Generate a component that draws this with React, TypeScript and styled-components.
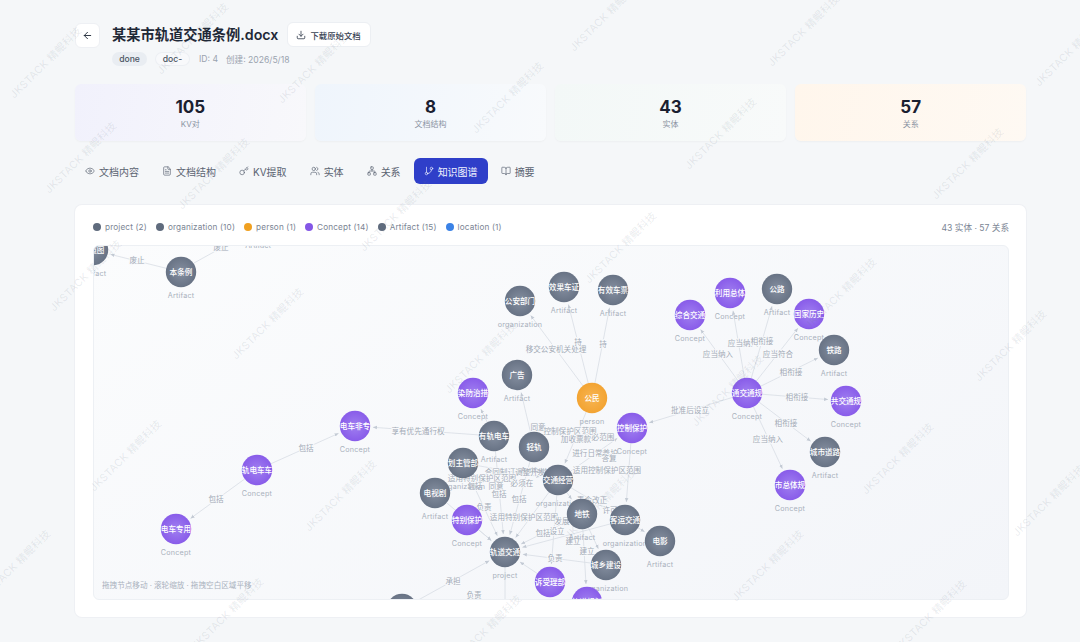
import React from "react";
import styled, { createGlobalStyle } from "styled-components";
import { ArrowLeft, Download, Eye, FileText, Key, Users, Network, GitBranch, BookOpen } from "lucide-react";

const GlobalStyle = createGlobalStyle`
  html, body { margin: 0; padding: 0; background: #f5f7f9; }
  body { font-family: Inter, "Noto Sans CJK SC", sans-serif; color: #1f2937; overflow: hidden; }
`;

const Page = styled.div`
  position: relative;
  width: 1080px;
  height: 642px;
  box-sizing: border-box;
  padding: 22px 54px 0 75px;
  overflow: hidden;
`;

const Header = styled.header`
  display: flex;
  gap: 12px;
`;

const BackButton = styled.button`
  width: 25px;
  height: 25px;
  margin-top: 1px;
  padding: 0;
  border: 1px solid #eef0f4;
  border-radius: 6px;
  background: #fff;
  color: #1f2937;
  display: flex;
  align-items: center;
  justify-content: center;
`;

const HeadText = styled.div`
  display: flex;
  flex-direction: column;
  gap: 5px;
`;

const TitleRow = styled.div`
  display: flex;
  align-items: center;
  gap: 9px;
`;

const Title = styled.h1`
  margin: 0;
  font-size: 14.25px;
  line-height: 25px;
  font-weight: 600;
  color: #1f2937;
`;

const DownloadButton = styled.button`
  display: flex;
  align-items: center;
  gap: 4px;
  height: 25px;
  width: 84px;
  padding: 0 0 0 8px;
  box-sizing: border-box;
  background: #fff;
  border: 1px solid #eceff3;
  border-radius: 6px;
  font: 500 8.4px Inter, "Noto Sans CJK SC", sans-serif;
  color: #374151;
`;

const MetaRow = styled.div`
  display: flex;
  align-items: center;
  height: 14px;
  font-size: 8.6px;
  color: #9aa3af;
`;

const Badge = styled.span<{ $outline?: boolean }>`
  width: 35px;
  height: 14px;
  line-height: 14px;
  text-align: center;
  border-radius: 7px;
  margin-right: 8px;
  font-weight: 500;
  color: #4b5563;
  background: ${(p) => (p.$outline ? "#f8f9fb" : "#e9edf2")};
  box-shadow: ${(p) => (p.$outline ? "inset 0 0 0 1px #eceff3" : "none")};
`;

const MetaItem = styled.span`
  margin-left: 1px;
  margin-right: 7px;
`;

const StatRow = styled.section`
  display: grid;
  grid-template-columns: repeat(4, 1fr);
  gap: 9.5px;
  margin-top: 18px;
`;

const StatCard = styled.div<{ $from: string; $to: string }>`
  height: 57px;
  padding-top: 2px;
  box-sizing: border-box;
  border-radius: 6px;
  background: linear-gradient(100deg, ${(p) => p.$from}, ${(p) => p.$to});
  box-shadow: 0 1px 2px rgba(15, 23, 42, 0.035);
  display: flex;
  flex-direction: column;
  align-items: center;
  justify-content: center;
`;

const StatValue = styled.div`
  font-size: 17px;
  line-height: 20px;
  font-weight: 700;
  color: #1a2030;
`;

const StatLabel = styled.div`
  margin-top: 2px;
  font-size: 8px;
  line-height: 11px;
  color: #8b94a3;
`;

const Tabs = styled.nav`
  display: flex;
  gap: 3px;
  margin-top: 17px;
`;

const Tab = styled.div<{ $active?: boolean }>`
  display: flex;
  align-items: center;
  gap: 4px;
  height: 26px;
  padding: 0 10px;
  border-radius: 6px;
  font-size: 10px;
  color: ${(p) => (p.$active ? "#f2f4ff" : "#5b6472")};
  background: ${(p) => (p.$active ? "#2f3fc9" : "transparent")};
`;

const Card = styled.section`
  margin-top: 21px;
  height: 412px;
  box-sizing: border-box;
  padding: 16px 17px 17px 18px;
  background: #fff;
  border-radius: 7px;
  box-shadow: 0 0 0 1px #eef0f4;
  display: flex;
  flex-direction: column;
`;

const CardHead = styled.div`
  display: flex;
  align-items: center;
  justify-content: space-between;
  height: 12px;
  margin-bottom: 12px;
`;

const Legend = styled.div`
  display: flex;
  gap: 9px;
`;

const LegendItem = styled.span`
  display: flex;
  align-items: center;
  gap: 4px;
  font-size: 8.2px;
  letter-spacing: 0.15px;
  color: #7b8594;
`;

const Dot = styled.i<{ $color: string }>`
  width: 8px;
  height: 8px;
  border-radius: 50%;
  background: ${(p) => p.$color};
`;

const Counts = styled.span`
  font-size: 8.6px;
  color: #7b8594;
`;

const Canvas = styled.div`
  position: relative;
  flex: 1;
  border: 1px solid #edf0f4;
  border-radius: 6px;
  background: linear-gradient(150deg, #fbfcfd, #f3f5f9);
  overflow: hidden;
`;

const GraphSvg = styled.svg`
  display: block;
  width: 100%;
  height: 100%;
  font-family: Inter, "Noto Sans CJK SC", sans-serif;
`;

const Hint = styled.div`
  position: absolute;
  left: 8px;
  bottom: 9px;
  font-size: 7.6px;
  color: #aab2be;
`;

const WatermarkText = styled.span`
  position: absolute;
  transform: translate(-50%, -50%) rotate(-45deg);
  white-space: nowrap;
  font-size: 10.5px;
  letter-spacing: 0.3px;
  color: rgba(110, 122, 140, 0.15);
  pointer-events: none;
`;

const tabs = [
  { icon: Eye, label: "文档内容" },
  { icon: FileText, label: "文档结构" },
  { icon: Key, label: "KV提取" },
  { icon: Users, label: "实体" },
  { icon: Network, label: "关系" },
  { icon: GitBranch, label: "知识图谱", active: true },
  { icon: BookOpen, label: "摘要" },
];

const stats = [
  { value: "105", label: "KV对", from: "#f1f1fc", to: "#f8f8fb" },
  { value: "8", label: "文档结构", from: "#eff5fc", to: "#f8fafc" },
  { value: "43", label: "实体", from: "#f3f8f7", to: "#f8fafa" },
  { value: "57", label: "关系", from: "#fff6ec", to: "#fef9f3" },
];

const legend = [
  { color: "#5f6b7d", label: "project (2)" },
  { color: "#5f6b7d", label: "organization (10)" },
  { color: "#f0a020", label: "person (1)" },
  { color: "#8457e6", label: "Concept (14)" },
  { color: "#5f6b7d", label: "Artifact (15)" },
  { color: "#3b82e6", label: "location (1)" },
];

type Kind = "artifact" | "org" | "project" | "concept" | "person";
const kinds: Record<Kind, { fill: string; sub: string }> = {
  artifact: { fill: "url(#grey)", sub: "Artifact" },
  org: { fill: "url(#grey)", sub: "organization" },
  project: { fill: "url(#grey)", sub: "project" },
  concept: { fill: "url(#violet)", sub: "Concept" },
  person: { fill: "url(#amber)", sub: "person" },
};

const nodes: Record<string, { x: number; y: number; kind: Kind; text: string }> = {
  corner: { x: 93, y: 250, kind: "artifact", text: "轨道图" },
  law: { x: 181, y: 272, kind: "artifact", text: "本条例" },
  police: { x: 520, y: 301, kind: "org", text: "公安部门" },
  cert: { x: 564, y: 287, kind: "artifact", text: "效果车证" },
  ticket: { x: 613, y: 290, kind: "artifact", text: "有效车票" },
  ad: { x: 517, y: 375, kind: "artifact", text: "广告" },
  pollution: { x: 473, y: 393, kind: "concept", text: "染防治措" },
  citizen: { x: 592, y: 398, kind: "person", text: "公民" },
  control: { x: 632, y: 428, kind: "concept", text: "控制保护" },
  tram: { x: 494, y: 436, kind: "artifact", text: "有轨电车" },
  light: { x: 534, y: 447, kind: "artifact", text: "轻轨" },
  planning: { x: 463, y: 463, kind: "org", text: "划主管部" },
  operator: { x: 558, y: 480, kind: "org", text: "交通经营" },
  tv: { x: 435, y: 493, kind: "artifact", text: "电视剧" },
  special: { x: 467, y: 520, kind: "concept", text: "特别保护" },
  metro: { x: 582, y: 514, kind: "artifact", text: "地铁" },
  passenger: { x: 625, y: 520, kind: "org", text: "客运交通" },
  film: { x: 660, y: 541, kind: "artifact", text: "电影" },
  rail: { x: 505, y: 552, kind: "project", text: "轨道交通" },
  urban: { x: 606, y: 565, kind: "org", text: "城乡建设" },
  appeal: { x: 550, y: 582, kind: "concept", text: "诉受理部" },
  lower: { x: 587, y: 602, kind: "concept", text: "轨道规划" },
  bottom: { x: 402, y: 609, kind: "artifact", text: "政府" },
  lane: { x: 355, y: 426, kind: "concept", text: "电车非专" },
  vehicle: { x: 257, y: 470, kind: "concept", text: "轨电车车" },
  only: { x: 176, y: 529, kind: "concept", text: "电车专用" },
  plan: { x: 747, y: 393, kind: "concept", text: "通交通规" },
  combo: { x: 690, y: 315, kind: "concept", text: "综合交通" },
  land: { x: 730, y: 293, kind: "concept", text: "利用总体" },
  road: { x: 777, y: 289, kind: "artifact", text: "公路" },
  history: { x: 809, y: 314, kind: "concept", text: "国家历史" },
  railway: { x: 834, y: 350, kind: "artifact", text: "铁路" },
  publicPlan: { x: 846, y: 401, kind: "concept", text: "共交通规" },
  street: { x: 825, y: 452, kind: "artifact", text: "城市道路" },
  cityPlan: { x: 790, y: 485, kind: "concept", text: "市总体规" },
};

const edges: [string, string][] = [
  ["law", "corner"], ["citizen", "police"], ["citizen", "cert"], ["citizen", "ticket"],
  ["light", "ad"], ["tram", "pollution"], ["tram", "lane"], ["vehicle", "lane"], ["vehicle", "only"],
  ["plan", "control"], ["plan", "combo"], ["plan", "land"], ["plan", "road"], ["plan", "history"],
  ["plan", "railway"], ["plan", "publicPlan"], ["plan", "street"], ["plan", "cityPlan"],
  ["citizen", "operator"], ["operator", "control"], ["operator", "metro"], ["operator", "rail"],
  ["planning", "rail"], ["tv", "rail"], ["special", "rail"], ["light", "rail"], ["tram", "rail"],
  ["metro", "rail"], ["passenger", "rail"], ["urban", "rail"], ["bottom", "rail"], ["appeal", "rail"],
  ["passenger", "film"], ["metro", "urban"], ["metro", "lower"], ["control", "passenger"],
  ["operator", "appeal"], ["operator", "passenger"], ["planning", "operator"],
];

const openEdges = [
  { x1: 194, y1: 263, x2: 250, y2: 232 },
  { x1: 505, y1: 567, x2: 505, y2: 604 },
];

const edgeLabels: [string, number, number][] = [
  ["废止", 137, 260], ["废止", 221, 247], ["移交公安机关处理", 556, 349], ["持", 578, 342], ["持", 603, 344],
  ["享有优先通行权", 418, 431], ["包括", 306, 448], ["包括", 216, 499], ["批准后设立", 690, 410],
  ["应当纳入", 718, 354], ["应当纳入", 743, 343], ["相衔接", 762, 341], ["应当符合", 778, 354],
  ["相衔接", 791, 372], ["相衔接", 797, 397], ["相衔接", 786, 423], ["应当纳入", 768, 439],
  ["同意", 538, 427], ["控制保护区范围", 570, 431], ["加收票款", 576, 439], ["必范围", 603, 437],
  ["进行日常养护", 595, 453], ["答复", 609, 458], ["适用控制保护区范围", 607, 470], ["合同制订调整开发", 515, 472],
  ["适用特别保护区范围", 482, 478], ["包括", 475, 486], ["同意", 496, 486], ["必须在", 522, 483], ["包括", 499, 494],
  ["包括", 519, 499], ["负责", 484, 507], ["适用特别保护区范围", 524, 517], ["责令改正", 592, 500], ["许可", 610, 510],
  ["发展", 562, 521], ["包括", 543, 533], ["设立", 557, 531], ["建立", 573, 541], ["建立", 587, 551],
  ["负责", 555, 558], ["承担", 453, 581], ["负责", 474, 595],
];

const watermarks = [
  [45, 62], [192, 38], [313, 67], [605, 15], [803, 30], [1070, 50],
  [80, 157], [213, 173], [395, 215], [507, 97], [720, 133], [967, 163],
  [85, 275], [267, 323], [480, 357], [620, 247], [840, 293], [1010, 345],
  [125, 455], [340, 495], [600, 503], [727, 390], [897, 458], [1048, 500],
  [14, 565], [227, 613], [485, 630], [767, 565], [930, 615],
];

function trimEdge(from: string, to: string) {
  const a = nodes[from];
  const b = nodes[to];
  const len = Math.hypot(b.x - a.x, b.y - a.y) || 1;
  const ux = (b.x - a.x) / len;
  const uy = (b.y - a.y) / len;
  return { x1: a.x + ux * 15, y1: a.y + uy * 15, x2: b.x - ux * 18, y2: b.y - uy * 18 };
}

function Graph() {
  return (
    <GraphSvg viewBox="94 246 914 353" preserveAspectRatio="none">
      <defs>
        <radialGradient id="grey" cx="50%" cy="50%" r="60%">
          <stop offset="0%" stopColor="#858fa0" />
          <stop offset="100%" stopColor="#626d7f" />
        </radialGradient>
        <radialGradient id="violet" cx="50%" cy="50%" r="60%">
          <stop offset="0%" stopColor="#a07ff0" />
          <stop offset="100%" stopColor="#8455e8" />
        </radialGradient>
        <radialGradient id="amber" cx="50%" cy="50%" r="60%">
          <stop offset="0%" stopColor="#f7b552" />
          <stop offset="100%" stopColor="#f2a02c" />
        </radialGradient>
        <marker id="arrow" markerWidth="6" markerHeight="6" refX="5" refY="3" orient="auto">
          <path d="M0 0.8 L5 3 L0 5.2 Z" fill="#c3cad4" />
        </marker>
      </defs>
      {edges.map(([from, to]) => (
        <line key={from + to} {...trimEdge(from, to)} stroke="#d8dde4" strokeWidth="0.8" markerEnd="url(#arrow)" />
      ))}
      {openEdges.map((e) => (
        <line key={e.x1} {...e} stroke="#d8dde4" strokeWidth="0.8" />
      ))}
      <text x="258" y="248" textAnchor="middle" fontSize="7.4" fill="#a3acb8">Artifact</text>
      {edgeLabels.map(([text, x, y], i) => (
        <text
          key={i}
          x={x}
          y={y}
          textAnchor="middle"
          dominantBaseline="central"
          fontSize="7.6"
          fill="#a2aab6"
          stroke="#f9fafc"
          strokeWidth="1.6"
          paintOrder="stroke"
        >
          {text}
        </text>
      ))}
      {Object.entries(nodes).map(([id, n]) => (
        <g key={id}>
          <circle cx={n.x} cy={n.y} r="15.2" fill={kinds[n.kind].fill} />
          <text x={n.x} y={n.y} textAnchor="middle" dominantBaseline="central" fontSize="7.6" fontWeight="500" fill="#fff">
            {n.text}
          </text>
          <text x={n.x} y={n.y + 23.5} textAnchor="middle" dominantBaseline="central" fontSize="7.2" letterSpacing="0.2" fill="#a9b1bc">
            {kinds[n.kind].sub}
          </text>
        </g>
      ))}
    </GraphSvg>
  );
}

export default function App() {
  return (
    <Page>
      <GlobalStyle />
      <Header>
        <BackButton><ArrowLeft size={11} /></BackButton>
        <HeadText>
          <TitleRow>
            <Title>某某市轨道交通条例.docx</Title>
            <DownloadButton><Download size={10} />下载原始文档</DownloadButton>
          </TitleRow>
          <MetaRow>
            <Badge>done</Badge>
            <Badge $outline>doc-</Badge>
            <MetaItem>ID: 4</MetaItem>
            <MetaItem>创建: 2026/5/18</MetaItem>
          </MetaRow>
        </HeadText>
      </Header>

      <StatRow>
        {stats.map((s) => (
          <StatCard key={s.label} $from={s.from} $to={s.to}>
            <StatValue>{s.value}</StatValue>
            <StatLabel>{s.label}</StatLabel>
          </StatCard>
        ))}
      </StatRow>

      <Tabs>
        {tabs.map((t) => (
          <Tab key={t.label} $active={t.active}>
            <t.icon size={10} strokeWidth={1.6} />
            {t.label}
          </Tab>
        ))}
      </Tabs>

      <Card>
        <CardHead>
          <Legend>
            {legend.map((l) => (
              <LegendItem key={l.label}><Dot $color={l.color} />{l.label}</LegendItem>
            ))}
          </Legend>
          <Counts>43 实体 · 57 关系</Counts>
        </CardHead>
        <Canvas>
          <Graph />
          <Hint>拖拽节点移动 · 滚轮缩放 · 拖拽空白区域平移</Hint>
        </Canvas>
      </Card>

      {watermarks.map(([x, y]) => (
        <WatermarkText key={`${x}-${y}`} style={{ left: x, top: y }}>JKSTACK 精鲲科技</WatermarkText>
      ))}
    </Page>
  );
}
